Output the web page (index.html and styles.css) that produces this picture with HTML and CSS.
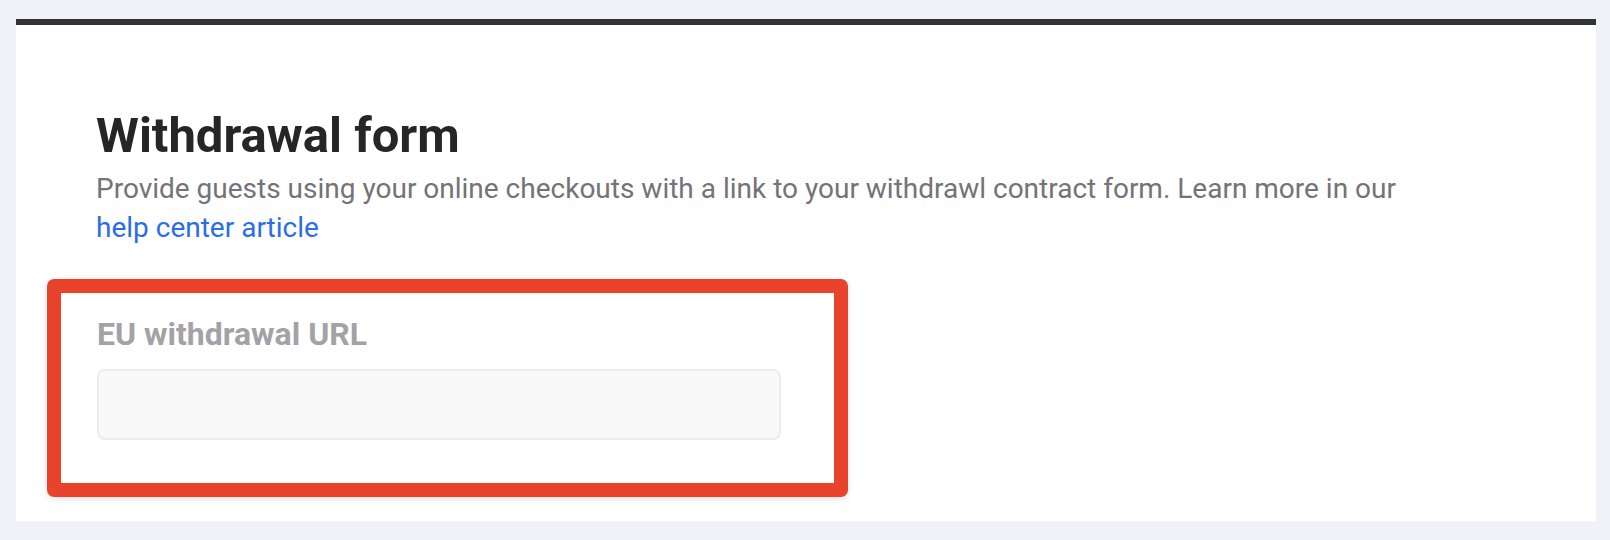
FILE: index.html
```html
<!DOCTYPE html>
<html lang="en">
<head>
<meta charset="utf-8">
<title>Withdrawal form</title>
<link rel="stylesheet" href="styles.css">
</head>
<body>
<div class="page">
  <section class="card">
    <h1 class="title">Withdrawal form</h1>
    <p class="desc">Provide guests using your online checkouts with a link to your withdrawl contract form. Learn more in our <a class="link" href="#">help center article</a></p>
    <div class="field-box">
      <label class="field-label" for="eu-url">EU withdrawal URL</label>
      <input class="field-input" id="eu-url" type="text">
    </div>
  </section>
</div>
</body>
</html>
```

FILE: styles.css
```css
* { box-sizing: border-box; }
html, body { margin: 0; padding: 0; }
body {
  background: #f1f2f7;
  font-family: Roboto, "Liberation Sans", sans-serif;
  width: 1610px;
  height: 540px;
  overflow: hidden;
}
.page {
  padding: 19px 14px 19px 16px;
}
.card {
  background: #ffffff;
  border-top: 6px solid #333336;
  height: 502px;
  padding: 83px 80px 24px 80px;
}
.title {
  margin: 0;
  font-size: 49px;
  line-height: 56px;
  font-weight: 700;
  color: #262628;
}
.desc {
  margin: 5px 0 0 0;
  font-size: 28px;
  line-height: 39px;
  color: #737378;
  max-width: 1340px;
}
.link {
  color: #2b6de8;
  text-decoration: none;
}
.field-box {
  margin: 32px 0 0 -49px;
  width: 801px;
  border: 14px solid #e9432b;
  border-radius: 7px;
  padding: 22px 36px 43px 36px;
  box-shadow: 0 2px 6px rgba(0, 0, 0, 0.12);
  display: flex;
  flex-direction: column;
  gap: 16px;
}
.field-label {
  font-size: 32px;
  line-height: 38px;
  font-weight: 700;
  color: #a2a2a7;
}
.field-input {
  width: 684px;
  height: 71px;
  background: #f9f9f9;
  border: 2px solid #ececec;
  border-radius: 8px;
  outline: none;
  font: inherit;
}
```
